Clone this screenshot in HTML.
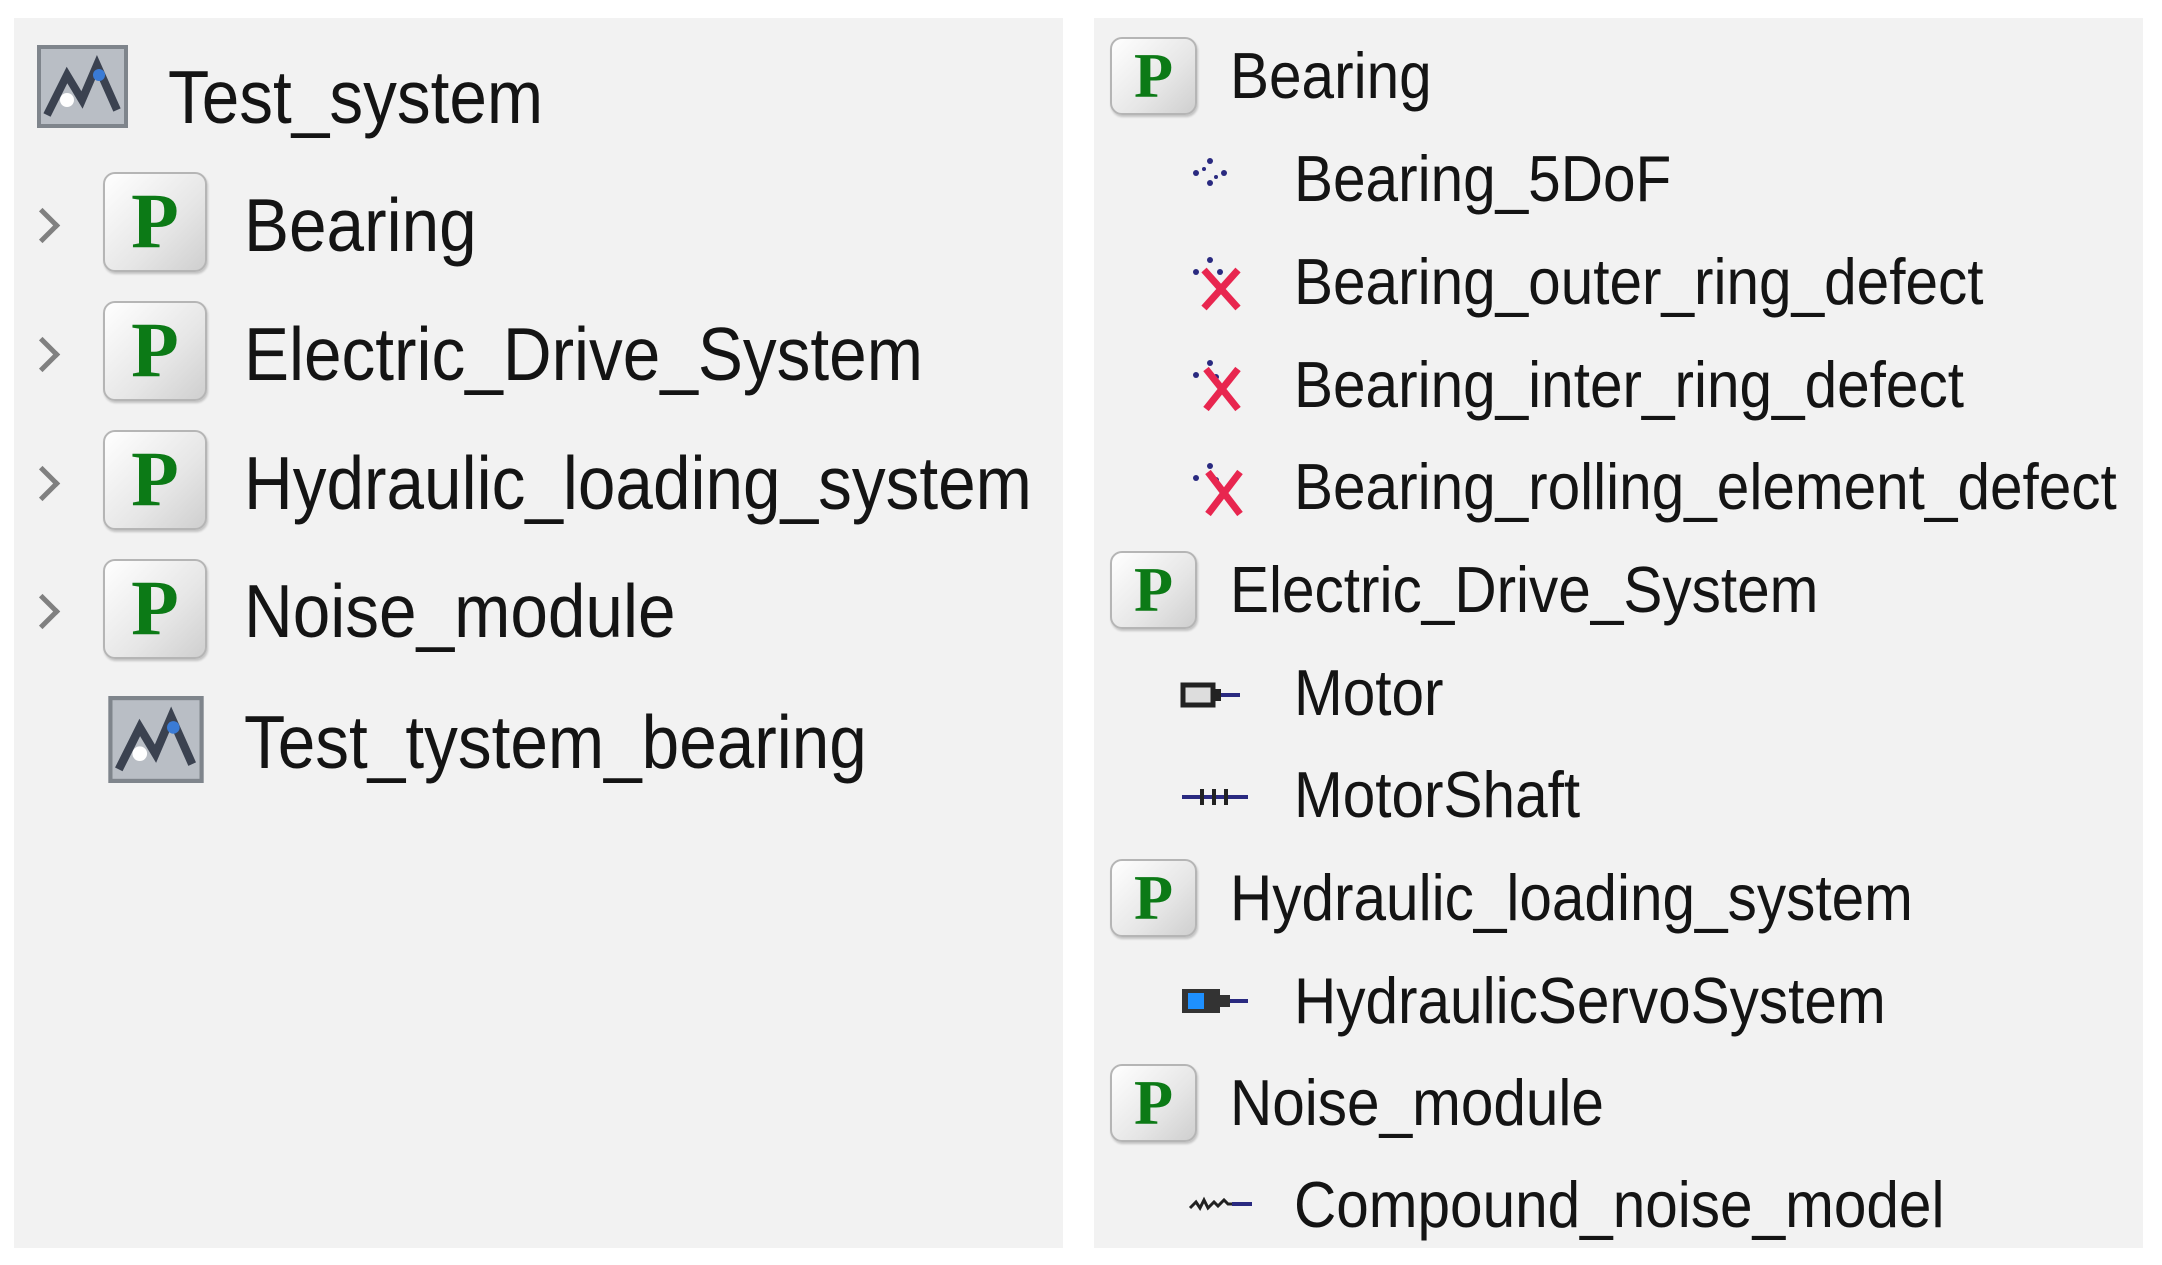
<!DOCTYPE html>
<html><head><meta charset="utf-8"><style>
body{margin:0;width:2162px;height:1265px;background:#fff;position:relative;overflow:hidden;font-family:"Liberation Sans",sans-serif;color:#141414}
.panel{position:absolute;background:#f2f2f2}
.t{position:absolute;white-space:nowrap;line-height:100px;height:100px;transform-origin:0 50%}
.L{font-size:75px;transform:scaleX(0.9)}
.R{font-size:65px;transform:scaleX(0.9)}
.p{position:absolute;box-sizing:border-box;border:2px solid #b5b5b5;border-radius:12px;background:linear-gradient(135deg,#ffffff,#e6e6e6 60%,#cfcfcf);box-shadow:1px 2px 2px rgba(0,0,0,.2);font-family:"Liberation Serif",serif;font-weight:bold;color:#0c7a16;text-align:center}
.chev{position:absolute;width:20px;height:20px;border-right:5px solid #808080;border-top:5px solid #808080;transform:rotate(45deg)}
.ic{position:absolute}
</style></head><body>
<div class="panel" style="left:14px;top:18px;width:1049px;height:1230px"></div>
<div class="panel" style="left:1094px;top:18px;width:1049px;height:1230px"></div>

<svg class="ic" style="left:37px;top:45px" width="91" height="83" viewBox="0 0 91 83"><rect width="91" height="83" fill="#7f858c"/><rect x="4" y="4" width="83" height="75" fill="#b9bec5"/><path d="M10 70 L30 30 L45 55 L60 20 L80 65" stroke="#3b4250" stroke-width="8" fill="none"/><circle cx="62" cy="30" r="6" fill="#3a7bd5"/><circle cx="30" cy="55" r="7" fill="#fff"/></svg>
<div class="t L" style="left:168px;top:47px">Test_system</div>

<div class="chev" style="left:30px;top:213px"></div>
<div class="p" style="left:103px;top:172px;width:104px;height:100px;font-size:78px;line-height:94px">P</div>
<div class="t L" style="left:244px;top:175px">Bearing</div>

<div class="chev" style="left:30px;top:342px"></div>
<div class="p" style="left:103px;top:301px;width:104px;height:100px;font-size:78px;line-height:94px">P</div>
<div class="t L" style="left:244px;top:304px">Electric_Drive_System</div>

<div class="chev" style="left:30px;top:471px"></div>
<div class="p" style="left:103px;top:430px;width:104px;height:100px;font-size:78px;line-height:94px">P</div>
<div class="t L" style="left:244px;top:433px">Hydraulic_loading_system</div>

<div class="chev" style="left:30px;top:599px"></div>
<div class="p" style="left:103px;top:559px;width:104px;height:100px;font-size:78px;line-height:94px">P</div>
<div class="t L" style="left:244px;top:561px">Noise_module</div>

<svg class="ic" style="left:108px;top:696px" width="96" height="87" viewBox="0 0 91 83"><rect width="91" height="83" fill="#7f858c"/><rect x="4" y="4" width="83" height="75" fill="#b9bec5"/><path d="M10 70 L30 30 L45 55 L60 20 L80 65" stroke="#3b4250" stroke-width="8" fill="none"/><circle cx="62" cy="30" r="6" fill="#3a7bd5"/><circle cx="30" cy="55" r="7" fill="#fff"/></svg>
<div class="t L" style="left:244px;top:692px">Test_tystem_bearing</div>

<div class="p" style="left:1110px;top:37px;width:87px;height:78px;font-size:64px;line-height:74px">P</div>
<div class="t R" style="left:1230px;top:26px">Bearing</div>

<svg class="ic" style="left:1190px;top:155px" width="50" height="36" viewBox="0 0 50 36"><g fill="#2a2a80"><circle cx="6" cy="18" r="3"/><circle cx="34" cy="18" r="3"/><circle cx="20" cy="6" r="3"/><circle cx="20" cy="28" r="3"/><circle cx="14" cy="14" r="2"/><circle cx="26" cy="22" r="2"/></g></svg>
<div class="t R" style="left:1294px;top:129px">Bearing_5DoF</div>

<svg class="ic" style="left:1190px;top:252px" width="60" height="60" viewBox="0 0 60 60"><g fill="#2a2a80"><circle cx="6" cy="20" r="3"/><circle cx="20" cy="8" r="3"/><circle cx="30" cy="20" r="3"/></g><path d="M14 18 L48 56 M48 18 L14 56" stroke="#e8264f" stroke-width="7"/></svg>
<div class="t R" style="left:1294px;top:232px">Bearing_outer_ring_defect</div>

<svg class="ic" style="left:1190px;top:355px" width="60" height="60" viewBox="0 0 60 60"><g fill="#2a2a80"><circle cx="6" cy="20" r="3"/><circle cx="20" cy="8" r="3"/><circle cx="26" cy="22" r="3"/></g><path d="M16 14 L48 54 M48 14 L16 54" stroke="#e8264f" stroke-width="7"/></svg>
<div class="t R" style="left:1294px;top:335px">Bearing_inter_ring_defect</div>

<svg class="ic" style="left:1190px;top:458px" width="60" height="60" viewBox="0 0 60 60"><g fill="#2a2a80"><circle cx="6" cy="20" r="3"/><circle cx="20" cy="8" r="3"/><circle cx="26" cy="22" r="3"/></g><path d="M18 14 L50 56 M50 14 L18 56" stroke="#e8264f" stroke-width="7"/></svg>
<div class="t R" style="left:1294px;top:437px">Bearing_rolling_element_defect</div>

<div class="p" style="left:1110px;top:551px;width:87px;height:78px;font-size:64px;line-height:74px">P</div>
<div class="t R" style="left:1230px;top:540px">Electric_Drive_System</div>

<svg class="ic" style="left:1180px;top:678px" width="66" height="34" viewBox="0 0 66 34"><rect x="3" y="7" width="30" height="20" fill="#ddd" stroke="#222" stroke-width="5"/><rect x="33" y="11" width="8" height="12" fill="#222"/><path d="M41 17 H60" stroke="#2a2a80" stroke-width="4"/></svg>
<div class="t R" style="left:1294px;top:643px">Motor</div>

<svg class="ic" style="left:1180px;top:782px" width="70" height="30" viewBox="0 0 70 30"><path d="M2 15 H68" stroke="#2a2a80" stroke-width="4"/><path d="M22 7 V23 M34 7 V23 M46 7 V23" stroke="#222" stroke-width="4"/></svg>
<div class="t R" style="left:1294px;top:745px">MotorShaft</div>

<div class="p" style="left:1110px;top:859px;width:87px;height:78px;font-size:64px;line-height:74px">P</div>
<div class="t R" style="left:1230px;top:848px">Hydraulic_loading_system</div>

<svg class="ic" style="left:1180px;top:984px" width="72" height="34" viewBox="0 0 72 34"><rect x="2" y="5" width="38" height="24" fill="#333"/><rect x="8" y="9" width="16" height="16" fill="#1e90ff"/><rect x="40" y="11" width="10" height="12" fill="#333"/><path d="M50 17 H68" stroke="#2a2a80" stroke-width="4"/></svg>
<div class="t R" style="left:1294px;top:951px">HydraulicServoSystem</div>

<div class="p" style="left:1110px;top:1064px;width:87px;height:78px;font-size:64px;line-height:74px">P</div>
<div class="t R" style="left:1230px;top:1053px">Noise_module</div>

<svg class="ic" style="left:1188px;top:1192px" width="66" height="24" viewBox="0 0 66 24"><path d="M2 16 L8 10 L12 16 L16 8 L20 16 L26 10 L30 14 L36 8 L40 12 H62" stroke="#222" stroke-width="3" fill="none"/><path d="M44 12 H64" stroke="#2a2a80" stroke-width="4"/></svg>
<div class="t R" style="left:1294px;top:1155px">Compound_noise_model</div>
</body></html>
